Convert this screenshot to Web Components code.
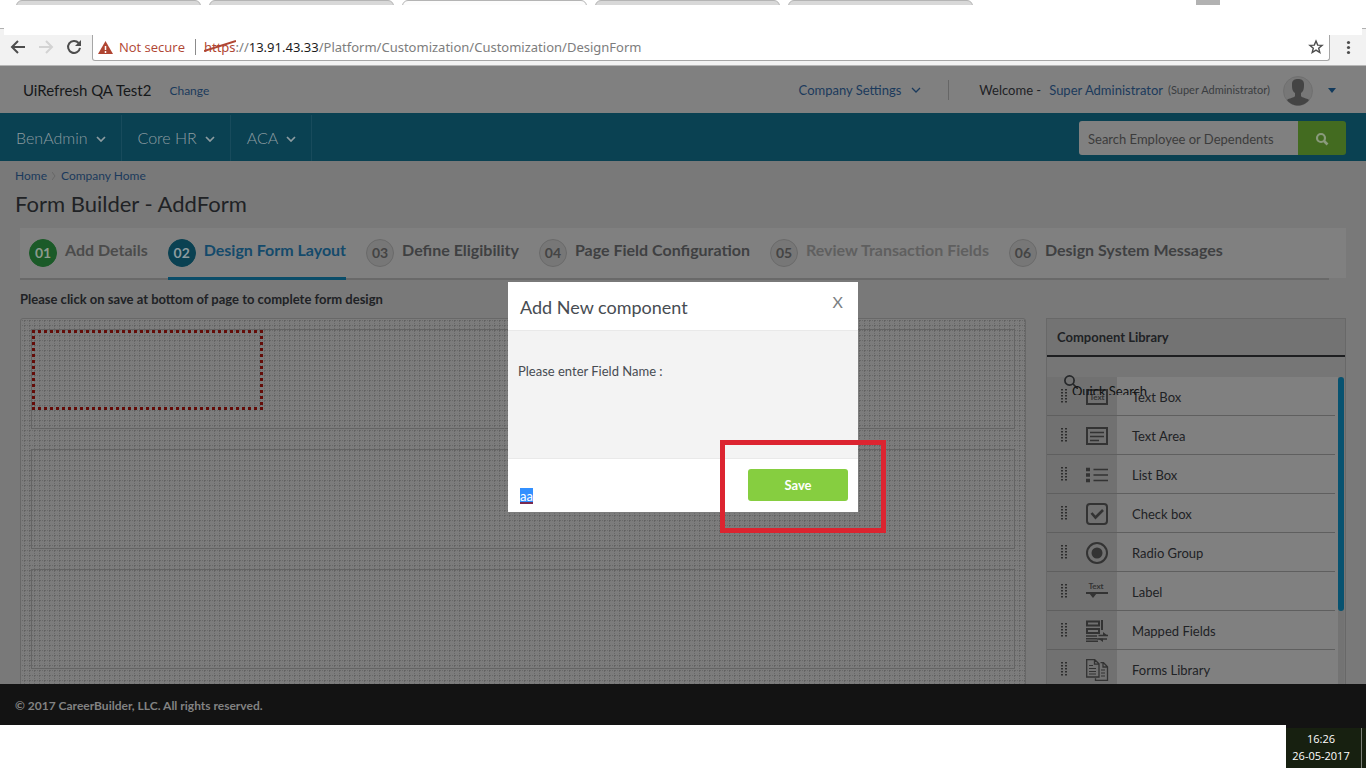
<!DOCTYPE html>
<html lang="en">
<head>
<meta charset="utf-8">
<title>Form Builder - AddForm</title>
<style>
  html, body {
    height: 100%;
    margin: 0;
  }
  body {
    display: flex;
    flex-direction: column;
    background: #fff;
    font-family: Lato, "Liberation Sans", sans-serif;
    font-size: 13px;
    line-height: 20px;
    color: #202225;
    overflow: hidden;
  }
</style>
</head>
<body>
<browser-bar></browser-bar>
<account-header company="UiRefresh QA Test2" user="Super Administrator"></account-header>
<main-nav></main-nav>
<form-builder>
  <wizard-step no="01" state="done">Add Details</wizard-step>
  <wizard-step no="02" state="active">Design Form Layout</wizard-step>
  <wizard-step no="03">Define Eligibility</wizard-step>
  <wizard-step no="04">Page Field Configuration</wizard-step>
  <wizard-step no="05" state="disabled">Review Transaction Fields</wizard-step>
  <wizard-step no="06">Design System Messages</wizard-step>
  <design-canvas slot="canvas"></design-canvas>
  <component-library slot="library">
    <library-item icon="textbox">Text Box</library-item>
    <library-item icon="textarea">Text Area</library-item>
    <library-item icon="list">List Box</library-item>
    <library-item icon="check">Check box</library-item>
    <library-item icon="radio">Radio Group</library-item>
    <library-item icon="label">Label</library-item>
    <library-item icon="mapped">Mapped Fields</library-item>
    <library-item icon="forms">Forms Library</library-item>
  </component-library>
</form-builder>
<page-footer>© 2017 CareerBuilder, LLC. All rights reserved.</page-footer>
<desktop-strip time="16:26" date="26-05-2017"></desktop-strip>
<field-dialog heading="Add New component">Please enter Field Name :</field-dialog>

<script>
const define = (name, html) => {
  customElements.define(name, class extends HTMLElement {
    connectedCallback() {
      if (this.shadowRoot) return;
      this.attachShadow({ mode: 'open' });
      this.shadowRoot.innerHTML = typeof html === 'function' ? html(this) : html;
    }
  });
};

const chevron = `<svg width="10" height="6" viewBox="0 0 10 6" fill="none" stroke="currentColor" stroke-width="1.700"><path d="M1 1l4 4 4-4"/></svg>`;

define('browser-bar', `
  <style>
    :host { display: block; flex: none; font-family: "Open Sans", "Noto Sans", sans-serif; }
    .tabs { display: flex; gap: 8px; height: 5px; padding: 0 16px; overflow: hidden; }
    .tab { width: 185px; height: 8px; box-sizing: border-box; background: #d8d8d8; border: 1px solid #b4b4b4; border-radius: 6px 6px 0 0; }
    .tab.current { background: #fcfcfc; }
    .chip { width: 24px; height: 5px; margin-left: auto; margin-right: 130px; background: #b2b2b2; }
    .edge { display: flex; justify-content: space-between; margin-top: 23px; }
    .edge i { width: 4px; height: 6px; background: #f2f2f2; border-top: 1px solid #b0b0b0; }
    .toolbar { display: flex; align-items: center; height: 30px; background: #f2f2f2; border-bottom: 1px solid #b6b6b6; }
    .nav { display: flex; width: 92px; box-sizing: border-box; padding: 0 9px; gap: 10px; align-self: flex-start; padding-top: 3px; }
    button { display: block; padding: 0; border: 0; background: none; }
    svg { display: block; }
    .omni { flex: 1; display: flex; align-items: center; align-self: flex-start; height: 26px; box-sizing: border-box; padding: 0 5px 1px; background: #fff; border: 1px solid #a6a6a6; border-top: 0; border-radius: 0 0 3px 3px; }
    .state { display: flex; align-items: center; gap: 6px; padding-right: 10px; border-right: 1px solid #8b8b8b; line-height: 16px; color: #b04532; }
    .url { flex: 1; padding-left: 8px; font-family: "Noto Sans", "Open Sans", sans-serif; line-height: 20px; color: #7d7d7d; }
    .url b { font-weight: 400; color: #1c1c1c; }
    .scheme { position: relative; color: #b04532; }
    .scheme svg { position: absolute; left: 0; top: 1px; }
    .more { padding: 0 15px 5px 16px; }
  </style>
  <div class="tabs"><div class="tab"></div><div class="tab"></div><div class="tab current"></div><div class="tab"></div><div class="tab"></div><div class="chip"></div></div>
  <div class="edge"><i></i><i></i></div>
  <div class="toolbar">
    <div class="nav">
      <button aria-label="Back"><svg width="18" height="18" viewBox="0 0 18 18" fill="none" stroke="#4d4d4d" stroke-width="2"><path d="M16 9H3M9 3L3 9l6 6"/></svg></button>
      <button aria-label="Forward"><svg width="18" height="18" viewBox="0 0 18 18" fill="none" stroke="#d3d3d3" stroke-width="2"><path d="M2 9h13M9 3l6 6-6 6"/></svg></button>
      <button aria-label="Reload"><svg width="18" height="18" viewBox="0 0 18 18"><path d="M13.600 5A6 6 0 1 0 15 9.900" fill="none" stroke="#4d4d4d" stroke-width="2"/><path d="M16 2v6h-6z" fill="#4d4d4d"/></svg></button>
    </div>
    <div class="omni">
      <span class="state"><svg width="15" height="13" viewBox="0 0 15 13"><path d="M7.500 0L15 13H0z" fill="#b04532"/><path d="M7.500 5v4M7.500 10v2" stroke="#fff" stroke-width="1.500"/></svg>Not secure</span>
      <span class="url"><span class="scheme">https<svg width="32" height="14" viewBox="0 0 32 14"><path d="M0 12L32 2" stroke="#b04532" stroke-width="2"/></svg></span>://<b>13.91.43.33</b>/Platform/Customization/Customization/DesignForm</span>
      <button aria-label="Bookmark"><svg width="16" height="16" viewBox="0 0 16 16" fill="none" stroke="#4d4d4d" stroke-width="1.400"><path d="M8 2l1.700 4.100 4.400.3-3.400 2.800 1.100 4.300L8 11.100l-3.800 2.400 1.100-4.300L1.900 6.400l4.400-.3z"/></svg></button>
    </div>
    <button class="more" aria-label="Menu"><svg width="5" height="15" viewBox="0 0 5 15" fill="#4d4d4d"><circle cx="2.500" cy="2.500" r="1.600"/><circle cx="2.500" cy="7.500" r="1.600"/><circle cx="2.500" cy="12.500" r="1.600"/></svg></button>
  </div>
`);

define('account-header', el => `
  <style>
    :host { display: flex; flex: none; align-items: center; height: 47px; padding: 0 30px 0 23px; background: #808080; white-space: nowrap; }
    a { color: #1b3a5c; text-decoration: none; }
    .name { font-size: 15px; color: #16181a; }
    .change { margin: 2px 0 0 18px; font-size: 12px; }
    .right { display: flex; align-items: center; margin-left: auto; }
    .settings { display: flex; align-items: center; gap: 10px; padding-right: 27px; border-right: 1px solid #666; }
    .welcome { padding: 0 8px 0 30px; }
    small { margin-left: 5px; font-size: 11px; color: #3a3d40; }
    .avatar { margin: 2px 15px 0 13px; }
    svg { display: block; }
  </style>
  <span class="name">${el.getAttribute('company')}</span>
  <a class="change" href="#">Change</a>
  <div class="right">
    <a class="settings" href="#">Company Settings ${chevron.replace('1.700', '1.300')}</a>
    <span class="welcome">Welcome -</span>
    <a href="#">${el.getAttribute('user')}</a>
    <small>(${el.getAttribute('user')})</small>
    <svg class="avatar" width="30" height="30" viewBox="0 0 30 30">
      <circle cx="15" cy="15" r="14.500" fill="#777" stroke="#707070"/>
      <path d="M9 8c0-4 3-5 6-5s6 1 6 5c0 4 0 7-3 9v3c1 2 6 2 8 4-3 4-7 5.500-11 5.500S7 28 4 24c2-2 7-2 8-4v-3C9 15 9 12 9 8z" fill="#444"/>
    </svg>
    <svg width="8" height="7" viewBox="0 0 8 7"><path d="M0 2h8L4 7z" fill="#123a5c"/></svg>
  </div>
`);

define('main-nav', `
  <style>
    :host { display: flex; flex: none; align-items: center; height: 46px; padding: 2px 20px 0 0; background: #0a4152; }
    a { display: flex; align-items: center; gap: 8px; height: 46px; box-sizing: border-box; padding: 0 15px 0 16px; border-right: 1px solid #184b5c; color: #8d9ca1; font-size: 16px; font-weight: 300; text-decoration: none; }
    a:first-child { padding-left: 15px; }
    svg { display: block; margin-top: 2px; }
    form { display: flex; width: 267px; height: 34px; margin: 0 0 0 auto; }
    input { flex: 1; min-width: 0; padding: 2px 9px 0; border: 0; border-radius: 3px 0 0 3px; background: #808080; font: 13px Lato, sans-serif; color: #333; }
    input::placeholder { color: #3c3c3c; opacity: 1; }
    button { display: flex; align-items: center; justify-content: center; width: 48px; padding: 0; border: 0; border-radius: 0 3px 3px 0; background: #436b20; }
  </style>
  <a href="#">BenAdmin ${chevron}</a>
  <a href="#">Core HR ${chevron}</a>
  <a href="#">ACA ${chevron}</a>
  <form>
    <input type="text" aria-label="Search" placeholder="Search Employee or Dependents">
    <button type="button" aria-label="Search"><svg width="14" height="14" viewBox="0 0 14 14" fill="none" stroke="#8a9a7c"><circle cx="6" cy="6" r="4" stroke-width="2.200"/><path d="M9 9l3.500 3.500" stroke-width="2.600"/></svg></button>
  </form>
`);

define('form-builder', `
  <style>
    :host { display: block; flex: 1; min-height: 0; overflow: hidden; background: #797979; }
    nav { display: flex; align-items: center; gap: 5px; padding: 5px 15px 0; font-size: 12px; }
    nav a { color: #1b3a5c; text-decoration: none; }
    h1 { margin: 0; padding: 4px 15px 10px; font-size: 22px; line-height: 28px; font-weight: 400; color: #202225; }
    .steps { margin: 0 20px; padding-right: 17px; background: linear-gradient(#808080 0 0) no-repeat 0 0 / 100% 50px; }
    .row { display: flex; gap: 20px; padding: 0 9px; height: 50px; border-bottom: 2px solid #696969; }
    p { margin: 0; padding: 9px 20px; font-weight: 700; }
    .work { display: flex; align-items: flex-start; gap: 20px; padding: 0 20px; }
    slot[name=canvas] { display: block; flex: 1; }
    slot[name=library] { display: block; width: 300px; }
  </style>
  <nav><a href="#">Home</a><svg width="4" height="8" viewBox="0 0 4 8" fill="none" stroke="#676767"><path d="M0 0l3 4-3 4"/></svg><a href="#">Company Home</a></nav>
  <h1>Form Builder - AddForm</h1>
  <div class="steps"><div class="row"><slot></slot></div></div>
  <p>Please click on save at bottom of page to complete form design</p>
  <div class="work"><slot name="canvas"></slot><slot name="library"></slot></div>
`);

define('wizard-step', el => `
  <style>
    :host { display: flex; align-items: flex-start; gap: 8px; height: 49px; font-size: 16px; font-weight: 700; color: #3f4042; white-space: nowrap; }
    :host([state=done]) { color: #4b4b4b; }
    :host([state=active]) { color: #144a6b; border-bottom: 3px solid #0a4d69; }
    :host([state=disabled]) { color: #5f5f5f; }
    .no { width: 28px; height: 28px; margin-top: 11px; box-sizing: border-box; border: 1px solid #6a6a6a; border-radius: 50%; background: #777; font-size: 14px; line-height: 26px; text-align: center; color: #444; }
    :host([state=done]) .no { background: #1b5a28; border-color: #1b5a28; color: #8c9a8e; }
    :host([state=active]) .no { background: #0a4152; border-color: #0a4152; color: #8c9a9e; }
    .text { margin-top: 12px; line-height: 20px; }
  </style>
  <span class="no">${el.getAttribute('no')}</span><span class="text"><slot></slot></span>
`);

// 5px dotted graph paper
const grid = `url("data:image/svg+xml,%3Csvg xmlns='http://www.w3.org/2000/svg' width='5' height='5'%3E%3Cpath d='M1 0h1v1h-1zM3 0h1v1h-1zM0 1h1v1h-1zM0 3h1v1h-1z' fill='%23686868'/%3E%3Cpath d='M0 0h1v1h-1z' fill='%23606060'/%3E%3C/svg%3E")`;

define('design-canvas', `
  <style>
    :host { display: flex; flex-direction: column; gap: 20px; padding: 10px; border: 1px solid #686868; border-radius: 3px; background: #7c7c7c ${grid} 3px 1px; }
    .zone { height: 98px; border: 1px solid #646464; }
    .drop {
      width: 231px; height: 80px;
      background:
        repeating-linear-gradient(90deg, #640c08 0 3px, transparent 3px 6px) 0 0 / 100% 3px no-repeat,
        repeating-linear-gradient(90deg, #640c08 0 3px, transparent 3px 6px) 0 100% / 100% 3px no-repeat,
        repeating-linear-gradient(#640c08 0 3px, transparent 3px 6px) 0 0 / 3px 100% no-repeat,
        repeating-linear-gradient(#640c08 0 3px, transparent 3px 6px) 100% 0 / 3px 100% no-repeat;
    }
  </style>
  <div class="zone"><div class="drop"></div></div>
  <div class="zone"></div>
  <div class="zone"></div>
  <div class="zone"></div>
`);

define('component-library', `
  <style>
    :host { display: block; border: 1px solid #686868; background: #737373; }
    h2 { margin: 0; padding: 8px 10px; border-bottom: 2px solid #1d1e20; font-size: 13px; line-height: 20px; font-weight: 700; }
    .body { position: relative; padding-top: 20px; background: #767676; }
    .list { display: grid; grid-template-columns: 1fr 6px; padding-right: 1px; }
    .track { background: #737373; }
    .thumb { height: 234px; border-radius: 3px; background: #075270; }
    .quick { position: absolute; left: 17px; top: 18px; width: 90px; height: 20px; overflow: hidden; }
    .quick svg { display: block; }
    .quick input { position: absolute; left: 8px; top: 6px; width: 80px; height: 20px; padding: 0; border: 0; background: none; font: 13px Lato, sans-serif; }
    .quick input::placeholder { color: #101112; opacity: 1; }
  </style>
  <h2>Component Library</h2>
  <div class="body">
    <div class="list"><div><slot></slot></div><div class="track"><div class="thumb"></div></div></div>
    <label class="quick"><svg width="14" height="14" viewBox="0 0 14 14" fill="none" stroke="#26282a" stroke-width="1.700"><circle cx="5.500" cy="5.500" r="4.600"/><path d="M9 9l5 5"/></svg><input type="text" placeholder="Quick Search" aria-label="Quick Search"></label>
  </div>
`);

const icons = {
  textbox: `<path d="M1 4h20v14H1z" stroke-width="2"/><text x="11" y="14" text-anchor="middle">Text</text>`,
  textarea: `<path d="M1 3h20v16H1z" stroke-width="2"/><path d="M4 7.500h14M4 11.500h14M4 15.500h9" stroke-width="1.500"/>`,
  list: `<path d="M0 5.500h4M0 11h4M0 16.500h4" stroke-width="3.500"/><path d="M7.500 5.500H22M7.500 11H22M7.500 16.500H22" stroke-width="1.700"/>`,
  check: `<rect x="1" y="1" width="20" height="20" rx="3" stroke-width="2"/><path d="M5.500 10l4 4.500L17 7" stroke-width="2.600"/>`,
  radio: `<circle cx="11" cy="11" r="10" stroke-width="2"/><circle cx="11" cy="11" r="5.500" fill="#333" stroke="none"/>`,
  label: `<path d="M0 12h22" stroke-width="2"/><path d="M3 12h8l-4 5z" fill="#333" stroke="none"/><text x="10" y="8" text-anchor="middle">Text</text>`,
  mapped: `<path d="M1 1.500h12v4H1zM1 9h12v4H1zM16 0v10" stroke-width="2"/><path d="M0 16h11M0 18.700h11M0 21.300h12M22 15.500H12.500M11 19h10" stroke-width="1.400"/><path d="M17 12l5 4h-5zM17 22l-5-3.500h5z" fill="#333" stroke="none"/>`,
  forms: `<path d="M.7.700h8l4.300 4V18H.7zM8.500.700v4.500H13M14.500 3.700h3l4 4V21.300H9.500v-2M17 4v4h4" stroke-width="1.300"/><path d="M3 6.500h4M3 9.500h7M3 12.500h7M3 15h7M15 11h4M15 14h4M15 17h4" stroke-width="1.100"/>`
};

define('library-item', el => `
  <style>
    :host { display: flex; height: 39px; background: linear-gradient(#808080 0 0) 70px 0 no-repeat, #717171; }
    .line { flex: 1; display: flex; align-items: center; margin-right: 3px; border-bottom: 1px solid #5f5f5f; }
    svg { display: block; }
    .grip { margin-left: 13px; }
    .icon { margin: 0 24px 0 18px; padding-top: 1px; fill: none; stroke: #333; overflow: visible; }
    text { fill: #333; stroke: none; font: 700 8px Lato, sans-serif; }
    span { padding-top: 1px; }
  </style>
  <div class="line">
    <svg class="grip" width="8" height="14" viewBox="0 0 8 14" stroke="#2e2e2e" stroke-width="2" stroke-dasharray="1.500 1.500"><path d="M2 0v14M6 0v14"/></svg>
    <svg class="icon" width="22" height="22" viewBox="0 0 22 22">${icons[el.getAttribute('icon')]}</svg>
    <span><slot></slot></span>
  </div>
`);

define('page-footer', `
  <style>
    :host { display: block; flex: none; padding: 12px 15px 9px; background: #131313; color: #828282; font-size: 12px; font-weight: 700; }
  </style>
  <slot></slot>
`);

define('desktop-strip', el => `
  <style>
    :host { display: flex; flex: none; justify-content: flex-end; height: 43px; background: #fff; }
    .clock { width: 60px; padding: 2px 15px 0 5px; border-top: 3px solid #131313; background: linear-gradient(#7c8078 0 0) 75px 0 / 1px 100% no-repeat, #172010; color: #fff; font: 11px/17px "Open Sans", "Noto Sans", sans-serif; text-align: center; white-space: nowrap; }
    time { display: block; }
  </style>
  <div class="clock"><time>${el.getAttribute('time')}</time><time>${el.getAttribute('date')}</time></div>
`);

define('field-dialog', el => `
  <style>
    :host { position: fixed; inset: 0; display: flex; justify-content: center; align-items: flex-start; padding-top: 282px; }
    .box { position: relative; width: 350px; background: #fff; color: #474c52; }
    header { display: flex; justify-content: space-between; align-items: flex-start; padding: 10px 15px 11px 12px; border-bottom: 1px solid #e9e9e9; }
    h2 { margin: 0; padding-top: 3px; font-size: 18px; line-height: 24px; font-weight: 400; }
    button { padding: 0; border: 0; background: none; font: 16px/20px Lato, sans-serif; color: #7b7f83; }
    .body { box-sizing: border-box; height: 127px; padding: 30px 10px; background: #f3f3f3; }
    footer { display: flex; justify-content: space-between; align-items: flex-start; padding: 10px 10px 8px 12px; border-top: 1px solid #e9e9e9; }
    input { width: 120px; height: 16px; margin-top: 19px; padding: 0; border: 0; background: linear-gradient(#7a2a50 0 0) no-repeat 0 100% / 13px 2px, linear-gradient(#3390ff 0 0) no-repeat 0 0 / 13px 16px; font: 13px/16px Lato, sans-serif; color: #fff; }
    .save { width: 100px; height: 32px; border-radius: 3px; background: #86ce40; color: #fff; font-size: 13px; font-weight: 700; }
    .mark { position: absolute; left: 212px; top: 158px; width: 156px; height: 83px; border: 5px solid #dc2430; pointer-events: none; }
  </style>
  <div class="box" role="dialog">
    <header><h2>${el.getAttribute('heading')}</h2><button aria-label="Close">X</button></header>
    <div class="body"><label for="field"><slot></slot></label></div>
    <footer><input id="field" type="text" value="aa"><button class="save">Save</button></footer>
    <div class="mark"></div>
  </div>
`);
</script>
</body>
</html>
